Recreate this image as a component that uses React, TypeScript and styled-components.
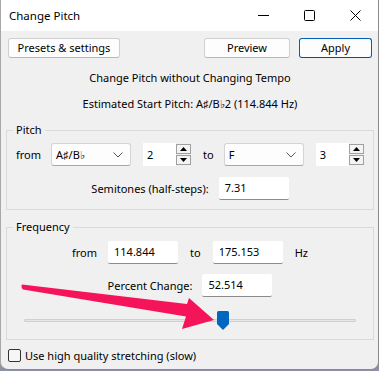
import React from 'react';
import styled, { createGlobalStyle } from 'styled-components';

const GlobalStyle = createGlobalStyle`
  html, body {
    margin: 0;
    padding: 0;
    background: #8e90a8;
  }
  body {
    font-family: "Segoe UI", "Noto Sans", "Liberation Sans", sans-serif;
    font-size: 11px;
    color: #000;
  }
`;

const Screen = styled.div`
  width: 379px;
  height: 371px;
  overflow: hidden;
  position: relative;
`;

const Window = styled.div`
  width: 377px;
  height: 369px;
  border: 1px solid #8a8a8a;
  border-top: none;
  border-left-color: #a8a8a8;
  border-radius: 0 0 8px 8px;
  background: #f0f0f0;
  display: flex;
  flex-direction: column;
  overflow: hidden;
`;

const TitleBar = styled.div`
  height: 31px;
  background: #fff;
  display: flex;
  align-items: center;
  padding-left: 8px;
  flex-shrink: 0;
`;

const Title = styled.div`
  flex: 1;
  font-size: 11.5px;
`;

const Controls = styled.div`
  display: flex;
  height: 100%;
`;

const CtrlBtn = styled.div`
  width: 46px;
  height: 100%;
  display: flex;
  align-items: center;
  justify-content: center;
`;

const Body = styled.div`
  flex: 1;
  display: flex;
  flex-direction: column;
  padding: 7px 4px 0 5px;
  position: relative;
`;

const ButtonRow = styled.div`
  display: flex;
  align-items: center;
  padding: 0 2px;
  gap: 9px;
`;

const Spacer = styled.div`
  flex: 1;
`;

const Button = styled.button<{ $width: number; $primary?: boolean }>`
  width: ${p => p.$width}px;
  height: 20px;
  font: inherit;
  color: #000;
  background: #fdfdfd;
  border: 1px solid ${p => (p.$primary ? '#005fb8' : '#d0d0d0')};
  border-bottom-color: ${p => (p.$primary ? '#0050a0' : '#b8b8b8')};
  border-radius: 3px;
  padding: 0;
  line-height: 18px;
`;

const Heading = styled.div<{ $top: number }>`
  text-align: center;
  margin-top: ${p => p.$top}px;
  line-height: 16px;
`;

const Group = styled.fieldset<{ $top: number; $height: number }>`
  margin: ${p => p.$top}px 0 0 0;
  height: ${p => p.$height}px;
  box-sizing: border-box;
  border: 1px solid #dadada;
  border-radius: 0;
  padding: 0;
  min-width: 0;
`;

const Legend = styled.legend`
  padding: 0 3px;
  margin-left: 6px;
  line-height: 16px;
`;

const Row = styled.div<{ $top: number; $center?: boolean; $left?: number }>`
  display: flex;
  align-items: center;
  margin-top: ${p => p.$top}px;
  justify-content: ${p => (p.$center ? 'center' : 'flex-start')};
  padding-left: ${p => p.$left ?? 0}px;
  height: 23px;
`;

const Label = styled.span<{ $gap: number }>`
  margin-right: ${p => p.$gap}px;
  white-space: nowrap;
`;

const Combo = styled.div<{ $gap: number }>`
  width: 80px;
  height: 23px;
  box-sizing: border-box;
  background: #fdfdfd;
  border: 1px solid #d4d4d4;
  border-bottom-color: #a8a8a8;
  border-radius: 3px;
  display: flex;
  align-items: center;
  padding: 0 7px 0 4px;
  margin-right: ${p => p.$gap}px;
`;

const ComboText = styled.span`
  flex: 1;
`;

const Spin = styled.div<{ $gap: number }>`
  display: flex;
  height: 23px;
  margin-right: ${p => p.$gap}px;
`;

const SpinField = styled.div`
  width: 33px;
  height: 23px;
  box-sizing: border-box;
  background: #fff;
  padding-left: 4px;
  line-height: 23px;
`;

const SpinButtons = styled.div`
  width: 15px;
  display: flex;
  flex-direction: column;
  gap: 1px;
  padding: 1px 0;
  box-sizing: border-box;
`;

const SpinBtn = styled.div`
  flex: 1;
  border: 1px solid #a0a0a0;
  background: #f4f4f4;
  display: flex;
  align-items: center;
  justify-content: center;
`;

const Field = styled.div<{ $gap?: number }>`
  width: 70px;
  height: 23px;
  box-sizing: border-box;
  background: #fff;
  border-bottom: 1px solid #8c8c8c;
  border-radius: 2px;
  padding-left: 6px;
  line-height: 22px;
  margin-right: ${p => p.$gap ?? 0}px;
`;

const SliderWrap = styled.div`
  margin: 14px 17px 0 17px;
  height: 18px;
  position: relative;
  display: flex;
  align-items: center;
`;

const Track = styled.div`
  flex: 1;
  height: 3px;
  box-sizing: border-box;
  background: #e6e6e6;
  border: 1px solid #d0d0d0;
  border-radius: 1px;
`;

const Thumb = styled.svg`
  position: absolute;
  top: 0;
`;

const CheckRow = styled.label`
  display: flex;
  align-items: center;
  margin-top: 8px;
  margin-left: 2px;
  gap: 4px;
`;

const CheckBox = styled.span`
  width: 13px;
  height: 13px;
  box-sizing: border-box;
  border: 1px solid #333;
  border-radius: 2px;
  background: #f6f6f6;
`;

const Arrow = styled.svg`
  position: absolute;
  left: 0;
  top: 0;
  pointer-events: none;
`;

const Chevron = () => (
  <svg width="10" height="6" viewBox="0 0 10 6">
    <path d="M0.5 0.5 L5 5 L9.5 0.5" fill="none" stroke="#555" strokeWidth="1" />
  </svg>
);

const Up = () => (
  <svg width="7" height="4" viewBox="0 0 7 4">
    <path d="M0 4 L3.5 0 L7 4 Z" fill="#000" />
  </svg>
);

const Down = () => (
  <svg width="7" height="4" viewBox="0 0 7 4">
    <path d="M0 0 L3.5 4 L7 0 Z" fill="#000" />
  </svg>
);

const SpinBox = ({ value, gap }: { value: string; gap: number }) => (
  <Spin $gap={gap}>
    <SpinField>{value}</SpinField>
    <SpinButtons>
      <SpinBtn><Up /></SpinBtn>
      <SpinBtn><Down /></SpinBtn>
    </SpinButtons>
  </Spin>
);

export default function App() {
  const sliderPos = 0.598;
  return (
    <Screen>
      <GlobalStyle />
      <Window>
        <TitleBar>
          <Title>Change Pitch</Title>
          <Controls>
            <CtrlBtn>
              <svg width="11" height="11" viewBox="0 0 11 11">
                <line x1="0" y1="5.5" x2="11" y2="5.5" stroke="#000" strokeWidth="1" />
              </svg>
            </CtrlBtn>
            <CtrlBtn>
              <svg width="11" height="11" viewBox="0 0 11 11">
                <rect x="0.5" y="0.5" width="10" height="10" rx="1" fill="none" stroke="#000" strokeWidth="1" />
              </svg>
            </CtrlBtn>
            <CtrlBtn>
              <svg width="11" height="11" viewBox="0 0 11 11">
                <path d="M0.5 0.5 L10.5 10.5 M10.5 0.5 L0.5 10.5" stroke="#000" strokeWidth="1" />
              </svg>
            </CtrlBtn>
          </Controls>
        </TitleBar>
        <Body>
          <ButtonRow>
            <Button $width={112}>Presets &amp; settings</Button>
            <Spacer />
            <Button $width={86}>Preview</Button>
            <Button $width={73} $primary>Apply</Button>
          </ButtonRow>
          <Heading $top={12}>Change Pitch without Changing Tempo</Heading>
          <Heading $top={10}>Estimated Start Pitch: A♯/B♭2 (114.844 Hz)</Heading>
          <Group $top={10} $height={88}>
            <Legend>Pitch</Legend>
            <Row $top={5} $left={9}>
              <Label $gap={10}>from</Label>
              <Combo $gap={12}><ComboText>A♯/B♭</ComboText><Chevron /></Combo>
              <SpinBox value="2" gap={12} />
              <Label $gap={10}>to</Label>
              <Combo $gap={12}><ComboText>F</ComboText><Chevron /></Combo>
              <SpinBox value="3" gap={0} />
            </Row>
            <Row $top={11} $center>
              <Label $gap={10}>Semitones (half-steps):</Label>
              <Field>7.31</Field>
            </Row>
          </Group>
          <Group $top={9} $height={121}>
            <Legend>Frequency</Legend>
            <Row $top={6} $center>
              <Label $gap={11}>from</Label>
              <Field $gap={12}>114.844</Field>
              <Label $gap={12}>to</Label>
              <Field $gap={12}>175.153</Field>
              <Label $gap={0}>Hz</Label>
            </Row>
            <Row $top={10} $center>
              <Label $gap={10}>Percent Change:</Label>
              <Field>52.514</Field>
            </Row>
            <SliderWrap>
              <Track />
              <Thumb
                width="12"
                height="19"
                viewBox="0 0 12 19"
                style={{ left: `calc(${sliderPos * 100}% - 6px)` }}
              >
                <path d="M1.5 0 H10.5 Q12 0 12 1.5 V13 L6 19 L0 13 V1.5 Q0 0 1.5 0 Z" fill="#0067c0" />
              </Thumb>
            </SliderWrap>
          </Group>
          <CheckRow>
            <CheckBox />
            <span>Use high quality stretching (slow)</span>
          </CheckRow>
        </Body>
      </Window>
      <Arrow width="379" height="371" viewBox="0 0 379 371">
        <path
          d="M22 284.5 L187 304 L189 298 L214 320 L182 329 L186 316.5 L23 289.5 Q20.5 287 22 284.5 Z"
          fill="#f5145a"
        />
      </Arrow>
    </Screen>
  );
}
